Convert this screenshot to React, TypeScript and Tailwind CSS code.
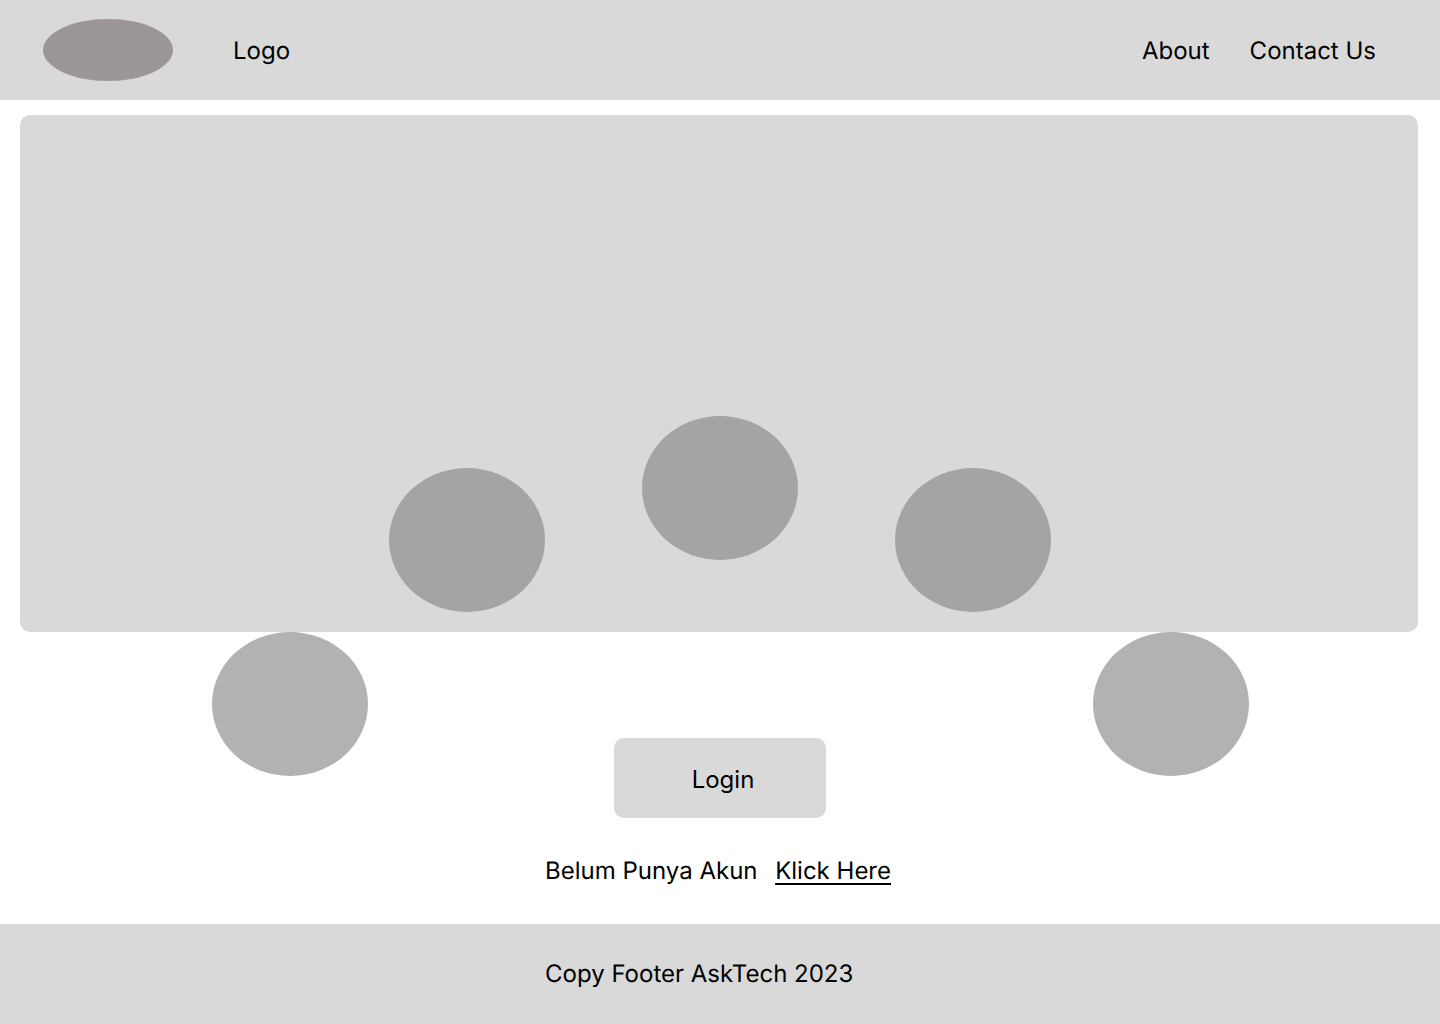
const bubble = 'absolute h-36 w-39 rounded-[50%]';

export default function App() {
  return (
    <div className="flex min-h-screen flex-col bg-white font-['Inter',sans-serif] text-2xl text-black antialiased [text-rendering:geometricPrecision]">
      <header className="flex h-25 items-center bg-[#d9d9d9] pr-16 pl-[43px]">
        <div className="h-[62px] w-[130px] rounded-[50%] bg-[#9d9696]" />
        <span className="ml-15 pt-0.5">Logo</span>
        <nav className="ml-auto flex gap-10 pt-0.5">
          <a href="#about">About</a>
          <a href="#contact">Contact Us</a>
        </nav>
      </header>

      <main className="relative flex grow flex-col items-center">
        <section className="mt-[15px] mr-[22px] ml-5 h-[517px] self-stretch rounded-[10px] bg-[#d9d9d9]" />
        <div className="absolute top-[316px] left-1/2 h-[360px] w-[1037px] -translate-x-[508px]">
          <div className={`${bubble} top-[216px] left-0 bg-[#b2b2b2]`} />
          <div className={`${bubble} top-[52px] left-[177px] bg-[#a4a4a4]`} />
          <div className={`${bubble} top-0 left-[430px] bg-[#a4a4a4]`} />
          <div className={`${bubble} top-[52px] left-[683px] bg-[#a4a4a4]`} />
          <div className={`${bubble} top-[216px] left-[881px] bg-[#b2b2b2]`} />
        </div>
        <button type="button" className="relative mt-[106px] h-20 w-53 rounded-[10px] bg-[#d9d9d9] pt-[3px] pl-1.5">
          Login
        </button>
        <p className="relative mt-[37px] flex w-[350px] justify-between whitespace-nowrap">
          <span>Belum Punya Akun</span>
          <a href="#register" className="mr-1 underline decoration-2 underline-offset-4">Klick Here</a>
        </p>
      </main>

      <footer className="flex h-25 items-center justify-center bg-[#d9d9d9]">
        <p className="w-[350px]">Copy Footer AskTech 2023</p>
      </footer>
    </div>
  );
}
